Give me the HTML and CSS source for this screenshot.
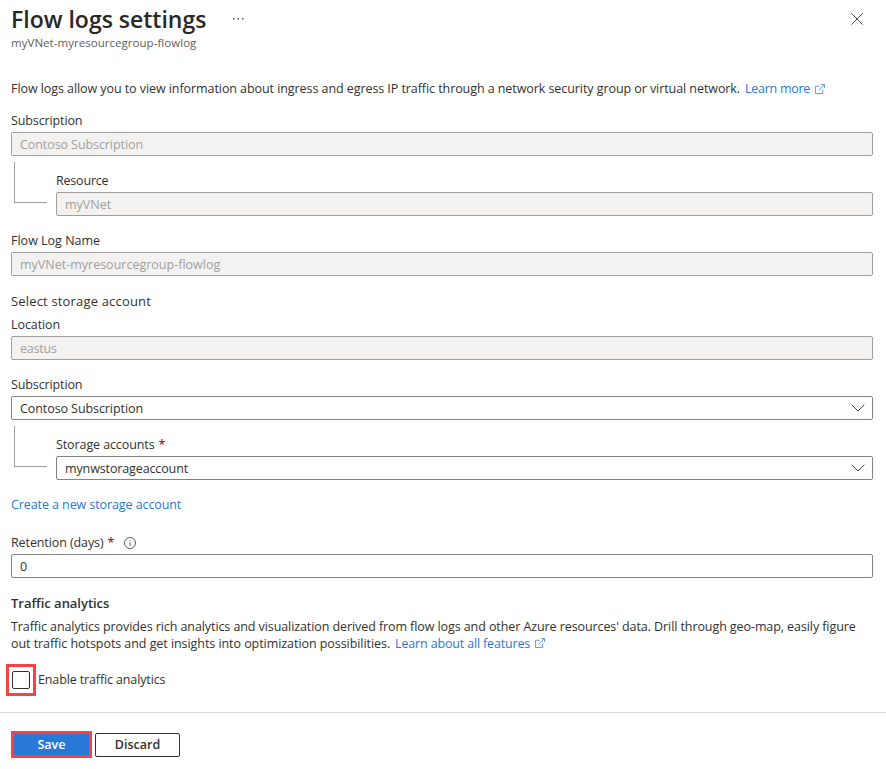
FILE: index.html
```
<!DOCTYPE html>
<html lang="en">
<head>
<meta charset="utf-8">
<title>Flow logs settings</title>
<link rel="stylesheet" href="styles.css">
</head>
<body>
<svg class="defs" aria-hidden="true">
  <symbol id="external" viewBox="0 0 11 11"><path d="M5 2.500H.5v8h8V6M4 7l6-6M6.500.5h4v4"/></symbol>
  <symbol id="chevron" viewBox="0 0 14 8"><path d="M.7.7 7 7 13.300.7"/></symbol>
</svg>
<header class="header">
  <div class="title-row">
    <h1 class="title"><span class="t-title">Flow logs settings</span></h1>
    <svg class="more" viewBox="0 0 12 2"><path d="M0 0h1.500v1.500H0zM4.500 0H6v1.500H4.500zM9 0h1.500v1.500H9z"/></svg>
    <svg class="close" viewBox="0 0 12 12"><path d="M.4.4l11.200 11.200M11.600.4.4 11.600"/></svg>
  </div>
  <p class="subtitle"><span class="t-sub">myVNet-myresourcegroup-flowlog</span></p>
</header>
<main class="form">
  <p class="intro"><span class="t-intro">Flow logs allow you to view information about ingress and egress IP traffic through a network security group or virtual network.</span><a class="link learn"><span class="t-more">Learn more</span><svg class="external"><use href="#external"/></svg></a></p>

  <div class="field"><label class="label"><span class="t-subscription">Subscription</span></label>
    <div class="input disabled"><span class="t-contoso">Contoso Subscription</span></div></div>
  <div class="nested"><i class="elbow"></i>
    <div class="field"><label class="label"><span class="t-resource">Resource</span></label>
      <div class="input disabled"><span class="t-vnet">myVNet</span></div></div></div>
  <div class="field"><label class="label"><span class="t-name">Flow Log Name</span></label>
    <div class="input disabled"><span class="t-flowlog">myVNet-myresourcegroup-flowlog</span></div></div>

  <h2 class="section"><span class="t-select">Select storage account</span></h2>
  <div class="field compact"><label class="label"><span class="t-location">Location</span></label>
    <div class="input disabled"><span class="t-east">eastus</span></div></div>
  <div class="field"><label class="label"><span class="t-subscription">Subscription</span></label>
    <div class="input"><span class="t-contoso">Contoso Subscription</span><svg class="chevron"><use href="#chevron"/></svg></div></div>
  <div class="nested"><i class="elbow"></i>
    <div class="field"><label class="label"><span class="t-accounts">Storage accounts</span><b class="required">*</b></label>
      <div class="input"><span class="t-account">mynwstorageaccount</span><svg class="chevron"><use href="#chevron"/></svg></div></div></div>
  <p class="create"><a class="link"><span class="t-create">Create a new storage account</span></a></p>
  <div class="field retention"><label class="label"><span class="t-retention">Retention (days)</span><b class="required">*</b><svg class="info" viewBox="0 0 12 12"><circle cx="6" cy="6" r="5.500"/><path d="M6 5v4M6 3v1"/></svg></label>
    <div class="input"><span>0</span></div></div>

  <h2 class="section bold"><span class="t-traffic">Traffic analytics</span></h2>
  <div class="about">
    <p class="line"><span class="t-line1">Traffic analytics provides rich analytics and visualization derived from flow logs and other Azure resources' data. Drill through geo-map, easily figure</span></p>
    <p class="line"><span class="t-line2">out traffic hotspots and get insights into optimization possibilities.</span><a class="link learn"><span class="t-features">Learn about all features</span><svg class="external"><use href="#external"/></svg></a></p>
  </div>
  <label class="enable"><span class="highlight"><span class="checkbox"></span></span><span class="t-enable">Enable traffic analytics</span></label>
</main>
<footer class="footer">
  <button class="button save"><span class="t-save">Save</span></button>
  <button class="button discard"><span class="t-discard">Discard</span></button>
</footer>
</body>
</html>
```
FILE: styles.css
```
* { box-sizing: border-box; }
body { margin: 0; background: #fff; color: #323130; font: 12.5px/18px "Open Sans", "Noto Sans", sans-serif; white-space: nowrap; }
h1, h2, p { margin: 0; font: inherit; }
svg { flex: none; fill: none; stroke: #444; display: block; }
.defs { display: none; }
.header { height: 78px; padding: 3px 0 0 11px; }
.title-row { display: flex; align-items: center; height: 32px; }
.title { font-size: 23px; font-weight: 600; line-height: 32px; color: #292827; width: 195px; margin-top: -1px; }
.more { width: 12px; height: 2px; margin-left: 27px; fill: #605e5c; stroke: none; }
.close { width: 12px; height: 12px; margin: 0 23px 0 auto; }
.subtitle { font-size: 11.5px; line-height: 16px; color: #605e5c; }
.form { padding: 2px 13px 0 11px; }
.intro { display: flex; align-items: center; }
.link { color: #2878d8; display: flex; align-items: center; }
.learn { margin-left: 5px; }
.external { width: 10px; height: 10px; margin-left: 5px; stroke: #5b8ee6; margin-bottom: 1px; }
.field { padding-top: 16px; flex: 1; }
.intro + .field { padding-top: 14px; }
.compact { padding-top: 6px; }
.label { display: flex; align-items: center; height: 18px; margin-bottom: 2px; }
.input { display: flex; align-items: center; justify-content: space-between; height: 24px; padding: 1px 8px 0; border: 1px solid #858381; border-radius: 2px; }
.disabled { background: #f3f2f1; border-color: #a19f9d; color: #a19f9d; }
.chevron { width: 14px; height: 8px; margin-right: -.5px; margin-bottom: 1px; }
.nested { display: flex; }
.elbow { width: 33px; height: 41px; margin: 6px 9px 0 3px; border: solid #a19f9d; border-width: 0 0 1px 1px; }
.required { color: #a4262c; margin-left: 4px; font-weight: 600; }
.info { width: 12px; height: 12px; margin-left: 10px; stroke: #605e5c; }
.section { padding-top: 16px; font-size: 13px; }
.bold { font-weight: 600; }
.create { display: flex; padding-top: 16px; }
.retention { padding-top: 20px; }
.about { padding-top: 6px; }
.line { display: flex; align-items: center; height: 17px; }
.enable { display: flex; align-items: center; gap: 2px; margin: 12px 0 0 -5px; height: 32px; }
.highlight { width: 30px; height: 32px; padding: 4px 3px; border: 3px solid #fb4142; }
.checkbox { display: block; width: 18px; height: 18px; border: 1px solid #323130; border-radius: 2px; }
.footer { display: flex; align-items: center; gap: 3px; margin-top: 16px; padding: 18px 0 0 11px; border-top: 1px solid #d8d6d4; }
.button { display: flex; align-items: center; justify-content: center; padding: 0; font: 600 12.5px/18px "Open Sans", sans-serif; }
.save { width: 81px; height: 27px; color: #fff; background: #2878d8; border: 3px solid #fb4142; }
.discard { width: 85px; height: 24px; color: #323130; background: #fff; border: 1px solid #323130; border-radius: 2px; }

/* Tracking */
.t-sub { letter-spacing: .04px; }
.t-intro { letter-spacing: -.07px; }
.t-more { letter-spacing: -.28px; }
.t-subscription { letter-spacing: -.12px; }
.t-contoso { letter-spacing: -.08px; }
.t-resource { letter-spacing: -.2px; }
.t-select { letter-spacing: .17px; }
.t-east { letter-spacing: -.2px; }
.t-location { letter-spacing: -.08px; }
.t-accounts { letter-spacing: -.1px; }
.t-account { letter-spacing: -.12px; }
.t-create { letter-spacing: -.09px; }
.t-retention { letter-spacing: -.1px; }
.t-traffic { letter-spacing: -.03px; }
.t-line1 { letter-spacing: -.086px; }
.t-line2 { letter-spacing: -.06px; }
.t-features { letter-spacing: -.16px; }
.t-enable { letter-spacing: -.13px; }
```
